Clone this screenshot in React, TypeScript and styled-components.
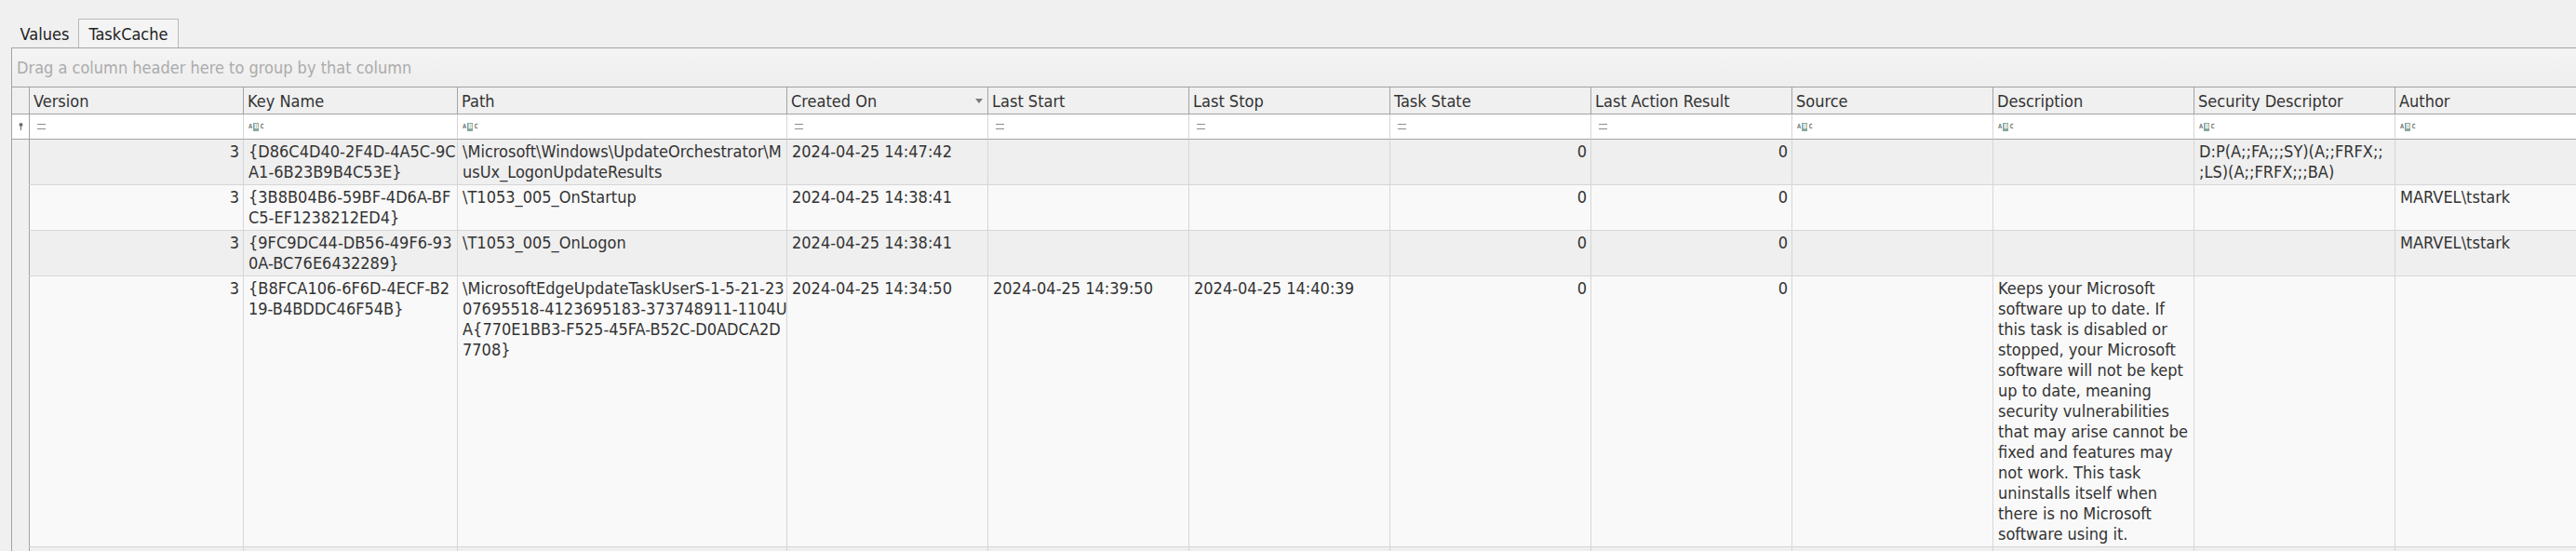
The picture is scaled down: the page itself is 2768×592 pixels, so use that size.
import React from "react";
import styled, { createGlobalStyle } from "styled-components";

const FONT = `"DejaVu Sans Condensed", "DejaVu Sans", "Liberation Sans", sans-serif`;
const COLS = "19px 230px 230px 354px repeat(9, 216px)";

const GlobalStyle = createGlobalStyle`
  html, body { margin: 0; padding: 0; background: #f0f0f0; overflow: hidden; }
  body { font-family: ${FONT}; }
`;

const Page = styled.div`
  width: 2768px;
  height: 592px;
  overflow: hidden;
  box-sizing: border-box;
  padding-top: 20px;
  background: #f0f0f0;
  font-family: ${FONT};
  font-size: 18px;
  color: #333333;
`;

const TabStrip = styled.div`
  display: flex;
  height: 31px;
  padding-left: 12px;
`;

const Tab = styled.div<{ $active?: boolean; $w: number }>`
  width: ${(p) => p.$w}px;
  height: 31px;
  box-sizing: border-box;
  display: flex;
  align-items: center;
  justify-content: center;
  border: 1px solid ${(p) => (p.$active ? "#b9b9b9" : "transparent")};
  border-bottom: none;
  background: ${(p) => (p.$active ? "#f4f4f4" : "transparent")};
  color: #222222;
  white-space: nowrap;
`;

const GridFrame = styled.div`
  margin-left: 12px;
  border-top: 1px solid #a3a3a3;
  border-left: 1px solid #a3a3a3;
  background: #f0f0f0;
  width: 2800px;
`;

const GroupPanel = styled.div`
  height: 42px;
  box-sizing: border-box;
  border-bottom: 1px solid #a3a3a3;
  display: flex;
  align-items: center;
  padding-left: 5px;
  color: #ababab;
  background: linear-gradient(#f4f4f4, #eeeeee);
  white-space: nowrap;
`;

const Row = styled.div`
  display: grid;
  grid-template-columns: ${COLS};
`;

const HeaderCell = styled.div`
  height: 29px;
  box-sizing: border-box;
  border-right: 1px solid #a3a3a3;
  border-bottom: 1px solid #a3a3a3;
  background: #f0f0f0;
  display: flex;
  align-items: center;
  padding-left: 4px;
  color: #333333;
  white-space: nowrap;
  overflow: hidden;
`;

const SortGlyph = styled.span`
  margin-left: auto;
  margin-right: 5px;
  width: 0;
  height: 0;
  border-left: 4px solid transparent;
  border-right: 4px solid transparent;
  border-top: 5px solid #7a7a7a;
`;

const FilterCell = styled.div<{ $indicator?: boolean }>`
  height: 27px;
  box-sizing: border-box;
  border-right: 1px solid ${(p) => (p.$indicator ? "#a3a3a3" : "#d6d6d6")};
  border-bottom: 1px solid #a3a3a3;
  background: #ffffff;
  display: flex;
  align-items: center;
  justify-content: ${(p) => (p.$indicator ? "center" : "flex-start")};
`;

const EqualsIcon = styled.span`
  margin-left: 8px;
  width: 9px;
  height: 4px;
  border-top: 1px solid #8c8c8c;
  border-bottom: 1px solid #8c8c8c;
`;

const AbcIcon = styled.span`
  margin-left: 5px;
  display: inline-flex;
  align-items: center;
  font-family: "DejaVu Sans Mono", monospace;
  font-size: 7px;
  line-height: 9px;
  font-weight: bold;
  color: #777777;
  letter-spacing: 0;
`;

const AbcMark = styled.span`
  background: #88a99a;
  color: #ffffff;
  padding: 0 1px;
  margin: 0 1px;
  height: 9px;
`;

const PinIcon = () => (
  <svg width="5" height="8" viewBox="0 0 5 8">
    <circle cx="2.5" cy="2" r="2" fill="#6e6e6e" />
    <rect x="2" y="3.5" width="1" height="4.5" fill="#6e6e6e" />
  </svg>
);

const DataCell = styled.div<{ $alt: boolean; $right?: boolean }>`
  box-sizing: border-box;
  border-right: 1px solid #d6d6d6;
  border-bottom: 1px solid #d6d6d6;
  background: ${(p) => (p.$alt ? "#f9f9f9" : "#efefef")};
  padding: 2px 4px 2px 5px;
  line-height: 22px;
  text-align: ${(p) => (p.$right ? "right" : "left")};
  color: #333333;
  overflow: hidden;
  min-height: 49px;
`;

const IndicatorCell = styled.div`
  box-sizing: border-box;
  border-right: 1px solid #a3a3a3;
  border-bottom: 1px solid #f0f0f0;
  background: #f0f0f0;
`;

const Line = styled.div`
  white-space: nowrap;
`;

type Col = { title: string; filter: "eq" | "abc"; right?: boolean; sorted?: boolean };

const columns: Col[] = [
  { title: "Version", filter: "eq", right: true },
  { title: "Key Name", filter: "abc" },
  { title: "Path", filter: "abc" },
  { title: "Created On", filter: "eq", sorted: true },
  { title: "Last Start", filter: "eq" },
  { title: "Last Stop", filter: "eq" },
  { title: "Task State", filter: "eq", right: true },
  { title: "Last Action Result", filter: "eq", right: true },
  { title: "Source", filter: "abc" },
  { title: "Description", filter: "abc" },
  { title: "Security Descriptor", filter: "abc" },
  { title: "Author", filter: "abc" },
];

const description = [
  "Keeps your Microsoft",
  "software up to date. If",
  "this task is disabled or",
  "stopped, your Microsoft",
  "software will not be kept",
  "up to date, meaning",
  "security vulnerabilities",
  "that may arise cannot be",
  "fixed and features may",
  "not work. This task",
  "uninstalls itself when",
  "there is no Microsoft",
  "software using it.",
];

const rows: string[][][] = [
  [
    ["3"],
    ["{D86C4D40-2F4D-4A5C-9C", "A1-6B23B9B4C53E}"],
    ["\\Microsoft\\Windows\\UpdateOrchestrator\\M", "usUx_LogonUpdateResults"],
    ["2024-04-25 14:47:42"],
    [],
    [],
    ["0"],
    ["0"],
    [],
    [],
    ["D:P(A;;FA;;;SY)(A;;FRFX;;", ";LS)(A;;FRFX;;;BA)"],
    [],
  ],
  [
    ["3"],
    ["{3B8B04B6-59BF-4D6A-BF", "C5-EF1238212ED4}"],
    ["\\T1053_005_OnStartup"],
    ["2024-04-25 14:38:41"],
    [],
    [],
    ["0"],
    ["0"],
    [],
    [],
    [],
    ["MARVEL\\tstark"],
  ],
  [
    ["3"],
    ["{9FC9DC44-DB56-49F6-93", "0A-BC76E6432289}"],
    ["\\T1053_005_OnLogon"],
    ["2024-04-25 14:38:41"],
    [],
    [],
    ["0"],
    ["0"],
    [],
    [],
    [],
    ["MARVEL\\tstark"],
  ],
  [
    ["3"],
    ["{B8FCA106-6F6D-4ECF-B2", "19-B4BDDC46F54B}"],
    [
      "\\MicrosoftEdgeUpdateTaskUserS-1-5-21-23",
      "07695518-4123695183-373748911-1104U",
      "A{770E1BB3-F525-45FA-B52C-D0ADCA2D",
      "7708}",
    ],
    ["2024-04-25 14:34:50"],
    ["2024-04-25 14:39:50"],
    ["2024-04-25 14:40:39"],
    ["0"],
    ["0"],
    [],
    description,
    [],
    [],
  ],
  columns.map(() => []),
];

export default function App() {
  return (
    <Page>
      <GlobalStyle />
      <TabStrip>
        <Tab $w={72}>Values</Tab>
        <Tab $w={108} $active>
          TaskCache
        </Tab>
      </TabStrip>
      <GridFrame>
        <GroupPanel>Drag a column header here to group by that column</GroupPanel>
        <Row>
          <HeaderCell />
          {columns.map((c) => (
            <HeaderCell key={c.title}>
              {c.title}
              {c.sorted && <SortGlyph />}
            </HeaderCell>
          ))}
        </Row>
        <Row>
          <FilterCell $indicator>
            <PinIcon />
          </FilterCell>
          {columns.map((c) => (
            <FilterCell key={c.title}>
              {c.filter === "eq" ? (
                <EqualsIcon />
              ) : (
                <AbcIcon>
                  A<AbcMark>B</AbcMark>C
                </AbcIcon>
              )}
            </FilterCell>
          ))}
        </Row>
        {rows.map((r, i) => (
          <Row key={i}>
            <IndicatorCell />
            {r.map((lines, j) => (
              <DataCell key={j} $alt={i % 2 === 1} $right={columns[j].right}>
                {lines.map((l, k) => (
                  <Line key={k}>{l}</Line>
                ))}
              </DataCell>
            ))}
          </Row>
        ))}
      </GridFrame>
    </Page>
  );
}
